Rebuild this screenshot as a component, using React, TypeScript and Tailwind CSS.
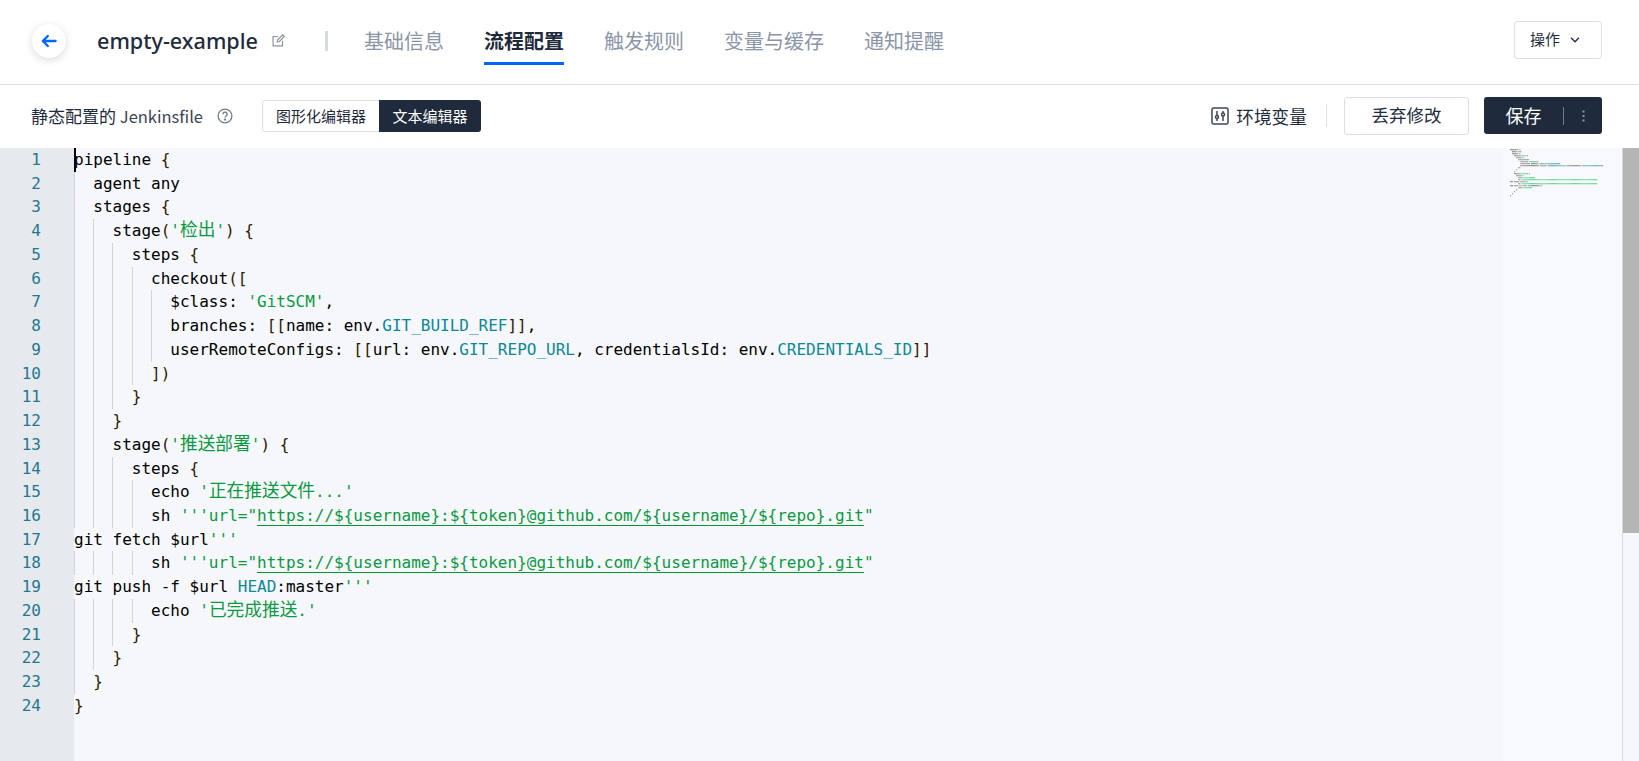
import React from "react";

type Seg = [string, string?];
const lines: { g: number; segs: Seg[] }[] = [
  { g: -1, segs: [["pipeline "], ["{", "b"]] },
  { g: 0, segs: [["  agent any"]] },
  { g: 0, segs: [["  stages "], ["{", "b"]] },
  { g: 1, segs: [["    stage"], ["(", "b"], ["'检出'", "s"], [")", "b"], [" "], ["{", "b"]] },
  { g: 2, segs: [["      steps "], ["{", "b"]] },
  { g: 3, segs: [["        checkout"], ["([", "b"]] },
  { g: 4, segs: [["          $class: "], ["'GitSCM'", "s"], [","]] },
  { g: 4, segs: [["          branches: "], ["[[", "b"], ["name: env."], ["GIT_BUILD_REF", "t"], ["]]", "b"], [","]] },
  { g: 4, segs: [["          userRemoteConfigs: "], ["[[", "b"], ["url: env."], ["GIT_REPO_URL", "t"], [", credentialsId: env."], ["CREDENTIALS_ID", "t"], ["]]", "b"]] },
  { g: 3, segs: [["        "], ["])", "b"]] },
  { g: 2, segs: [["      "], ["}", "b"]] },
  { g: 1, segs: [["    "], ["}", "b"]] },
  { g: 1, segs: [["    stage"], ["(", "b"], ["'推送部署'", "s"], [")", "b"], [" "], ["{", "b"]] },
  { g: 2, segs: [["      steps "], ["{", "b"]] },
  { g: 3, segs: [["        echo "], ["'正在推送文件...'", "s"]] },
  { g: 3, segs: [["        sh "], ["'''url=\"", "s"], ["https://${username}:${token}@github.com/${username}/${repo}.git", "u"], ["\"", "s"]] },
  { g: -1, segs: [["git fetch $url"], ["'''", "s"]] },
  { g: 3, segs: [["        sh "], ["'''url=\"", "s"], ["https://${username}:${token}@github.com/${username}/${repo}.git", "u"], ["\"", "s"]] },
  { g: -1, segs: [["git push -f $url "], ["HEAD", "t"], [":master"], ["'''", "s"]] },
  { g: 3, segs: [["        echo "], ["'已完成推送.'", "s"]] },
  { g: 2, segs: [["      "], ["}", "b"]] },
  { g: 1, segs: [["    "], ["}", "b"]] },
  { g: 0, segs: [["  "], ["}", "b"]] },
  { g: -1, segs: [["}", "b"]] },
];

const guides = [0, 1, 2, 3, 4];
const guideClass = ["left-0", "left-[19px]", "left-[38px]", "left-[58px]", "left-[77px]"];

function Text({ text }: { text: string }) {
  return (
    <>
      {text.split(/([\u4e00-\u9fff]+)/).map((part, i) =>
        i % 2 === 1 ? (
          <span key={i} className="text-[17.7px]">{part}</span>
        ) : (
          <React.Fragment key={i}>{part}</React.Fragment>
        )
      )}
    </>
  );
}

function Seg({ seg }: { seg: Seg }) {
  const [text, kind] = seg;
  const cls =
    kind === "s"
      ? "text-[#0a9a40]"
      : kind === "t"
      ? "text-[#0b8899]"
      : kind === "b"
      ? "text-[#2e1c00]"
      : kind === "u"
      ? "text-[#0a9a40] underline decoration-[#009a36] underline-offset-[4px]"
      : "text-black";
  return (
    <span className={cls}>
      <Text text={text} />
    </span>
  );
}

function Minimap() {
  return (
    <svg width="120" height="62" viewBox="0 0 120 62" className="block blur-[0.4px]">
      {lines.map((l, i) => {
        let x = 0;
        return l.segs.map((s, j) => {
          const raw = s[0];
          const fill = s[1] === "s" || s[1] === "u" ? "#5fcf90" : s[1] === "t" ? "#58b4bd" : "#8a8a8a";
          const start = x;
          x += raw.length;
          return raw.split("").map((ch, k) =>
            ch === " " ? null : (
              <rect key={`${i}-${j}-${k}`} x={8 + (start + k) * 1.05} y={i * 2 + 1} width={0.85} height={1.3} fill={fill} />
            )
          );
        });
      })}
    </svg>
  );
}

export default function App() {
  const tabs = ["基础信息", "流程配置", "触发规则", "变量与缓存", "通知提醒"];
  const sans = "font-['Noto_Sans_CJK_SC','Noto_Sans',sans-serif]";
  return (
    <div className={`h-[761px] w-[1639px] overflow-hidden flex flex-col bg-white ${sans}`}>
      {/* header */}
      <div className="h-[85px] shrink-0 border-b border-[#dadfe8] flex items-center pl-[32px] pr-[37px]">
        <div className="w-[34px] h-[34px] mt-[-3px] rounded-full bg-white shadow-[0_2px_8px_rgba(0,0,0,0.15)] flex items-center justify-center">
          <svg width="16" height="14" viewBox="0 0 16 14" fill="none" stroke="#0066ff" strokeWidth="2.4" strokeLinecap="round" strokeLinejoin="round">
            <path d="M14.5 7H2M6.8 2 1.8 7l5 5" />
          </svg>
        </div>
        <div className="ml-[31px] mt-[-3px] text-[21.6px] font-medium leading-[30px] text-[#1f2b3d] font-['Noto_Sans',sans-serif]">empty-example</div>
        <svg className="ml-[14px] mt-[-4px]" width="13" height="13" viewBox="0 0 13 13" fill="none" stroke="#8a93a3" strokeWidth="1.2">
          <path d="M10.5 7v4.9H1.1V2.5H6M5.2 8l.4-2.2L10.7.8l1.7 1.7-5 5z" />
        </svg>
        <div className="ml-[40px] mr-[36px] w-[3px] h-[20px] mt-[-3px] bg-[#d6dbe3]" />
        <div className="flex gap-[40px] h-full items-stretch">
          {tabs.map((t, i) => (
            <div
              key={t}
              className={`flex items-center text-[20px] leading-[28px] border-b-[3px] mb-[19px] mt-[19px] ${
                i === 1 ? "font-bold text-[#1f2b3d] border-[#0066ff]" : "text-[#8b95a8] border-transparent"
              }`}
            >
              {t}
            </div>
          ))}
        </div>
        <div className="ml-auto w-[88px] h-[38px] mt-[-5px] pr-[6px] border border-[#dadfe8] rounded-[3px] flex items-center justify-center gap-[10px] text-[15px] text-[#1f2b3d]">
          操作
          <svg width="10" height="6" viewBox="0 0 10 6" fill="none" stroke="#1f2b3d" strokeWidth="1.3"><path d="M1 .8 5 4.8 9 .8" /></svg>
        </div>
      </div>

      {/* toolbar */}
      <div className="h-[63px] shrink-0 flex items-center pl-[31px] pr-[37px] pb-[2px]">
        <div className="text-[17px] text-[#1f2b3d] leading-[24px] w-[172px] whitespace-nowrap">
          静态配置的 <span className="text-[16.5px] text-[#3a4557]">Jenkinsfile</span>
        </div>
        <svg className="ml-[14px]" width="16" height="16" viewBox="0 0 16 16" fill="none" stroke="#6f7a8c" strokeWidth="1.3">
          <circle cx="8" cy="8" r="6.9" />
          <path d="M5.9 6.2a2.1 2.1 0 1 1 3.2 1.8c-.7.4-1.1.8-1.1 1.6" />
          <circle cx="8" cy="11.6" r=".5" fill="#6f7a8c" />
        </svg>
        <div className="ml-[29px] flex h-[32px] rounded-[3px] overflow-hidden text-[15px] leading-[20px]">
          <div className="w-[117px] border border-r-0 border-[#dadfe8] rounded-l-[3px] flex items-center justify-center text-[#1f2b3d]">图形化编辑器</div>
          <div className="w-[102px] bg-[#1f2b3d] text-white flex items-center justify-center">文本编辑器</div>
        </div>
        <div className="ml-auto flex items-center">
          <svg width="18" height="18" viewBox="0 0 18 18" fill="none" stroke="#3d4757" strokeWidth="1.5">
            <rect x="1" y="1" width="16" height="16" rx="1.5" />
            <path d="M6 4v10M12 4v10" />
            <circle cx="6" cy="10" r="1.5" fill="white" />
            <circle cx="12" cy="7.5" r="1.5" fill="white" />
          </svg>
          <div className="ml-[7px] text-[17.7px] leading-[24px] text-[#1f2b3d]">环境变量</div>
          <div className="ml-[19px] w-px h-[23px] bg-[#dadfe8]" />
          <div className="ml-[17px] w-[125px] h-[38px] border border-[#dadfe8] rounded-[3px] flex items-center justify-center text-[17.5px] text-[#1f2b3d]">丢弃修改</div>
          <div className="ml-[15px] w-[118px] h-[37px] bg-[#1f2b3d] rounded-[3px] flex items-center text-white text-[18px]">
            <div className="w-[79px] text-center">保存</div>
            <div className="w-px h-[18px] bg-[#6f7a8c]" />
            <svg className="ml-[18px]" width="3" height="12" viewBox="0 0 3 12" fill="#8a93a3">
              <rect x="0.5" y="0.5" width="2" height="2" />
              <rect x="0.5" y="5" width="2" height="2" />
              <rect x="0.5" y="9.5" width="2" height="2" />
            </svg>
          </div>
        </div>
      </div>

      {/* editor */}
      <div className="flex-1 flex bg-[#f5f7fb] min-h-0">
        <div className="w-[74px] shrink-0 bg-[#e6e9ed] font-['DejaVu_Sans_Mono',monospace] text-[16px] leading-[23.74px] text-[#23788f]">
          {lines.map((_, i) => (
            <div key={i} className="h-[23.74px] w-[41px] text-right">{i + 1}</div>
          ))}
        </div>
        <div className="flex-1 relative font-['DejaVu_Sans_Mono','Noto_Sans_CJK_SC',monospace] text-[16px] leading-[23.74px] whitespace-pre min-w-0">
          <div className="absolute left-0 top-0 w-[2px] h-[23.74px] bg-black" />
          {lines.map((l, i) => (
            <div key={i} className="h-[23.74px] relative">
              {guides.filter((g) => g <= l.g).map((g) => (
                <span key={g} className={`absolute top-0 bottom-0 w-px bg-[#d3d3d3] ${guideClass[g]}`} />
              ))}
              {l.segs.map((s, j) => <Seg key={j} seg={s} />)}
            </div>
          ))}
        </div>
        <div className="w-[120px] shrink-0 bg-[#f8f9fc]">
          <Minimap />
        </div>
        <div className="w-[17px] shrink-0 border-l border-[#d8d8d8]">
          <div className="h-[385px] bg-[#b5b5b5]" />
        </div>
      </div>
    </div>
  );
}
